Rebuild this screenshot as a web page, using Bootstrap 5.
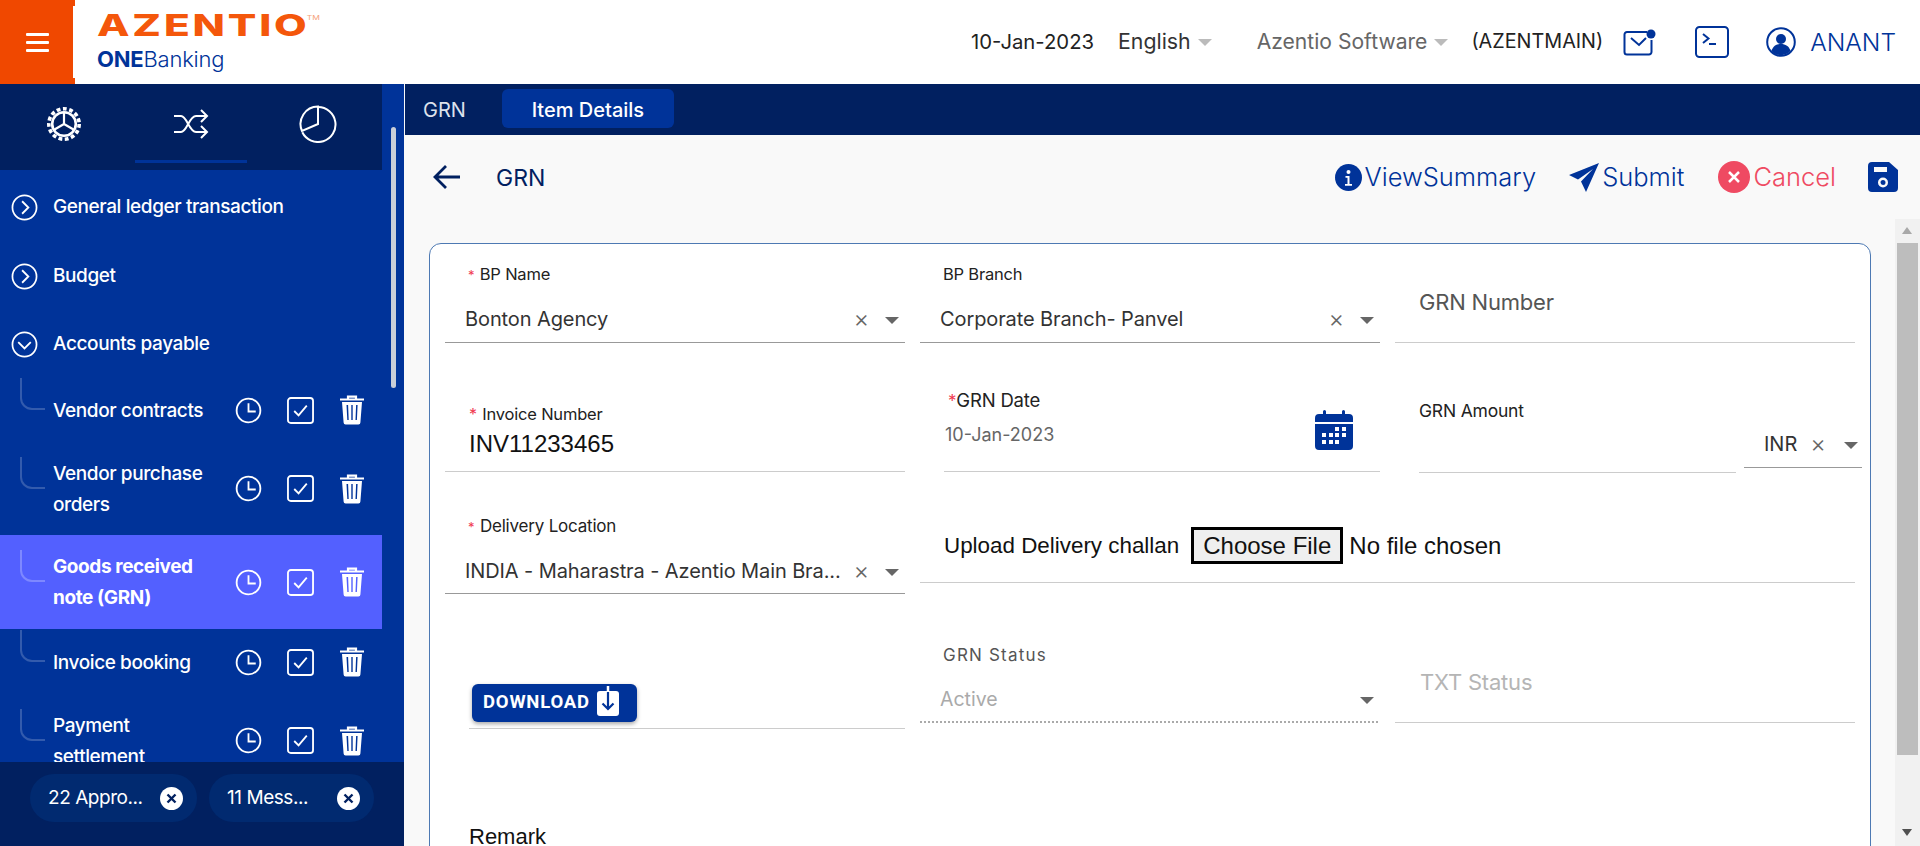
<!DOCTYPE html>
<html lang="en">
<head>
  <meta charset="UTF-8" />
  <meta name="viewport" content="width=device-width, initial-scale=1.0"/>
  <title>GRN - Item Details</title>
  <link href="https://cdn.jsdelivr.net/npm/bootstrap@5.3.0/dist/css/bootstrap.min.css" rel="stylesheet"/>
  <style>
    html, body { height: 100%; overflow: hidden; }
    body { font-family: Inter, "Liberation Sans", sans-serif; background: #f9f9f9; color: #222; }

    /* header */
    .top-bar { height: 84px; background: #fff; flex-wrap: nowrap; }
    .burger { width: 75px; height: 84px; background: #f04800; position: relative; flex: none; }
    .burger::after { content: ""; position: absolute; right: 0; top: 6px; bottom: 6px; width: 2px; background: #fff; }
    .burger span { display: block; width: 23px; height: 3px; background: #fff; margin: 2.5px 0; border-radius: 1px; }
    .logo-box { margin-left: 22px; }
    .logo-main { font: 800 30px/26px Inter, sans-serif; color: #f4570b; letter-spacing: 2px; transform: scaleX(1.41); transform-origin: left center; white-space: nowrap; }
    .logo-main sup { font-size: 6px; font-weight: 400; top: -16px; letter-spacing: 0; color: #f6a27a; margin-left: -2px; }
    .logo-sub { font: 300 22px/26px Inter, sans-serif; color: #003399; margin-top: 8px; letter-spacing: -.2px; }
    .logo-sub b { font-weight: 700; }
    .top-date { font-size: 20.3px; color: #222; margin-right: 24px; }
    .top-lang { font-size: 21.3px; color: #333; }
    .top-org { font-size: 21.1px; color: #666; margin-left: 45px; }
    .top-caret { width: 0; height: 0; border-left: 7px solid transparent; border-right: 7px solid transparent; border-top: 7px solid #bbb; margin-left: 7px; }
    .top-code { font-size: 19.8px; color: #222; margin-left: 23px; margin-right: 20px; }
    .top-user { font-size: 24.5px; color: #003399; margin-left: 14px; font-weight: 300; }
    .top-gap-a { margin-left: 39px; }
    .top-gap-b { margin-left: 37px; }

    /* sidebar */
    .page-body { height: 762px; }
    .side-wrap { width: 404px; flex: none; background: #003399; font-family: Inter, sans-serif; position: relative; overflow: hidden; }
    .side-tabs { width: 382px; height: 86px; background: #012060; position: relative; flex: none; }
    .side-tabs .tab-cell { width: 127px; height: 80px; }
    .tab-line { position: absolute; left: 135px; top: 76px; width: 112px; height: 3px; background: #003399; }
    .side-thumb { position: absolute; left: 391px; top: 43px; width: 5px; height: 261px; background: #c8ced8; border-radius: 3px; }
    .side-list { width: 382px; flex: 1 1 auto; overflow: hidden; padding-top: 3px; }
    .menu-top { color: #fff; font-size: 19px; font-weight: 500; padding-left: 11px; gap: 15px; letter-spacing: -.4px; }
    .menu-sub { position: relative; color: #fff; font-size: 19px; font-weight: 500; line-height: 31px; padding-left: 53px; letter-spacing: -.4px; }
    .menu-sub::before { content: ""; position: absolute; left: 20px; top: calc(50% - 32px); width: 25px; height: 32px; border-left: 2px solid rgba(255,255,255,.2); border-bottom: 2px solid rgba(255,255,255,.2); border-bottom-left-radius: 12px; }
    .menu-sub.is-active { background: #5360ff; font-weight: 700; }
    .menu-sub.is-active::before { border-color: rgba(255,255,255,.25); }
    .menu-name { width: 165px; flex: none; }
    .menu-acts { gap: 25px; margin-left: 17px; }
    .side-foot { height: 84px; background: #012060; flex: none; padding: 12px 30px 0; gap: 12px; position: relative; }
    .foot-chip { height: 48px; background: #012a70; border-radius: 24px; color: #fff; font-size: 19px; padding: 0 14px 0 18px; letter-spacing: -.45px; }
    .foot-close { width: 23px; height: 23px; border-radius: 50%; background: #fff; flex: none; }

    /* main */
    .main-wrap { flex: 1 1 auto; min-width: 0; }
    .sub-tabs { height: 51px; background: #012060; margin-left: 1px; padding-left: 18px; flex: none; }
    .sub-tab { font-size: 20px; color: #dde2ec; }
    .sub-tab-on { height: 39px; width: 172px; margin-top: 5px; margin-left: 36px; padding-top: 2px; background: #003399; color: #fff; font-weight: 500; border-radius: 6px; }
    .tool-bar { height: 84px; flex: none; padding: 0 22px 0 29px; }
    .tool-title { font-size: 23px; color: #012060; margin-left: 35px; margin-top: 3px; }
    .tool-act { font-size: 25.5px; font-weight: 300; color: #003399; gap: 3px; }
    .tool-act.is-cancel { color: #ef4a62; }
    .scroll-area { flex: 1 1 auto; min-height: 0; }
    .form-pane { flex: 1 1 auto; min-width: 0; padding: 24px 24px 0 25px; overflow: hidden; }
    .form-card { border: 1px solid #4d79b3; border-radius: 12px; background: #fff; padding: 0 15px 60px; }
    .grn-row { --bs-gutter-x: 15px; --bs-gutter-y: 0; align-items: flex-start; }
    .fake-bar { width: 25px; flex: none; background: #f1f1f1; position: relative; }
    .fake-bar .bar-thumb { position: absolute; left: 2px; right: 2px; top: 24px; height: 512px; background: #bdbdbd; }
    .bar-up, .bar-down { position: absolute; left: 7px; width: 0; height: 0; border-left: 5.5px solid transparent; border-right: 5.5px solid transparent; }
    .bar-up { top: 8px; border-bottom: 7px solid #a8a8a8; }
    .bar-down { bottom: 10px; border-top: 7px solid #505050; }

    /* fields */
    .fld { border-bottom: 1px solid #ccc; position: relative; display: flex; flex-direction: column; }
    .fld-sel { border-bottom-color: #999; }
    .ht-99 { height: 99px; }
    .ht-129 { height: 129px; }
    .ht-122 { height: 122px; }
    .ht-111 { height: 111px; }
    .ht-135 { height: 135px; }
    .fld-lbl { font-size: 16.5px; color: #222; line-height: 20px; letter-spacing: -.2px; }
    .req { color: #f0394f; font-size: 13px; margin-right: 1px; }
    .fld-val { font-size: 20px; color: #333; line-height: 24px; padding-left: 20px; letter-spacing: -.1px; }
    .sel-line { position: relative; padding-right: 72px; white-space: nowrap; }
    .sel-x { position: absolute; right: 36px; top: 0; font-size: 24px; line-height: 24px; color: #666; font-weight: 300; }
    .sel-caret { position: absolute; right: 6px; top: 10px; width: 0; height: 0; border-left: 7px solid transparent; border-right: 7px solid transparent; border-top: 7px solid #666; }
    .arial { font-family: "Liberation Sans", sans-serif; }
    .inv-val { font-size: 24px; color: #111; }
    input.file-in { font: 24px "Liberation Sans", sans-serif; color: #111; width: 370px; background: none; }
    input.file-in::file-selector-button { font: 24px "Liberation Sans", sans-serif; color: #111; background: #efefef; border: 3px solid #000; border-radius: 0; padding: 0 9px; height: 37px; margin-right: 6px; }
    .up-label { font: 22.4px "Liberation Sans", sans-serif; color: #111; margin-right: 12px; }
    .btn-dl { background: #003399; color: #fff; font-family: Roboto, sans-serif; font-size: 18.5px; font-weight: 700; height: 38px; width: 165px; border: 0; border-radius: 6px; padding: 0 0 0 11px; box-shadow: 0 2px 4px rgba(0,0,0,.35); letter-spacing: .8px; gap: 7px; }
    .btn-dl:hover { background: #003399; color: #fff; }
    .dotted-line { border-bottom: 2px dotted #aaa; }
    .muted-lbl { font-size: 17px; color: #555; letter-spacing: 1.2px; line-height: 20px; }
    .ph-big { font-size: 22px; line-height: 24px; letter-spacing: -.2px; }
    .remark-lbl { font: 22px "Liberation Sans", Roboto, sans-serif; color: #111; margin-top: 95px; padding-left: 24px; line-height: 26px; }
  </style>
</head>
<body>

<svg width="0" height="0" class="d-block position-absolute">
  <symbol id="ic-clock" viewBox="0 0 28 28"><circle cx="14" cy="14" r="12.3" fill="none" stroke="#fff" stroke-width="1.9"/><path d="M14 6.5V15h7.5" fill="none" stroke="#fff" stroke-width="1.9"/></symbol>
  <symbol id="ic-check" viewBox="0 0 28 28"><rect x="1" y="1" width="26" height="26" rx="3" fill="none" stroke="#fff" stroke-width="1.9"/><path d="M7.5 14.5l4.5 4.5 8.5-10" fill="none" stroke="#fff" stroke-width="1.9"/></symbol>
  <symbol id="ic-trash" viewBox="0 0 26 30"><path d="M9 3.5V1.6h8v1.9M1 4.5h24" fill="none" stroke="#fff" stroke-width="2.2"/><path fill-rule="evenodd" fill="#fff" d="M3 7h20l-1.6 20.5a2 2 0 0 1-2 2H6.600a2 2 0 0 1-2-2zM7.500 10l.8 15h1.400l-.6-15zM12.300 10v15h1.400V10zM17.100 10l-.6 15h1.400l.7-15z"/></symbol>
  <symbol id="ic-right" viewBox="0 0 28 28"><circle cx="14" cy="14" r="12.500" fill="none" stroke="#fff" stroke-width="1.800"/><path d="M11.500 7.500L18 14l-6.500 6.500" fill="none" stroke="#fff" stroke-width="1.900"/></symbol>
  <symbol id="ic-down" viewBox="0 0 28 28"><circle cx="14" cy="14" r="12.500" fill="none" stroke="#fff" stroke-width="1.800"/><path d="M7.500 11.500L14 18l6.500-6.500" fill="none" stroke="#fff" stroke-width="1.900"/></symbol>
  <symbol id="ic-x" viewBox="0 0 23 23"><path d="M7.500 7.500l8 8M15.500 7.500l-8 8" stroke="#012060" stroke-width="2.400" fill="none"/></symbol>
</svg>

<header class="navbar top-bar p-0 d-flex align-items-center">
  <div class="burger d-flex flex-column align-items-center justify-content-center"><span></span><span></span><span></span></div>
  <div class="logo-box">
    <div class="logo-main">AZENTIO<sup>TM</sup></div>
    <div class="logo-sub"><b>ONE</b>Banking</div>
  </div>
  <div class="ms-auto d-flex align-items-center pe-4">
    <span class="top-date">10-Jan-2023</span>
    <span class="top-lang">English</span><span class="top-caret"></span>
    <span class="top-org">Azentio Software</span><span class="top-caret"></span>
    <span class="top-code">(AZENTMAIN)</span>
    <svg width="33" height="27" viewBox="0 0 33 27"><path d="M24 3H4a2.500 2.500 0 0 0-2.500 2.500V23A2.500 2.500 0 0 0 4 25.500h22a2.500 2.500 0 0 0 2.500-2.500V11" fill="none" stroke="#003399" stroke-width="2"/><path d="M8 9l8 7 7-7" fill="none" stroke="#003399" stroke-width="2"/><circle cx="28" cy="5" r="4.500" fill="#003399"/></svg>
    <svg width="34" height="32" viewBox="0 0 34 32" class="top-gap-a"><rect x="1" y="1" width="32" height="30" rx="3.500" fill="none" stroke="#003399" stroke-width="2"/><path d="M8 8l5.500 4.500L8 17M14 18h7" fill="none" stroke="#003399" stroke-width="2"/></svg>
    <svg width="30" height="30" viewBox="0 0 30 30" class="top-gap-b"><circle cx="15" cy="15" r="13.800" fill="none" stroke="#003399" stroke-width="2"/><circle cx="15" cy="12" r="5" fill="#003399"/><path d="M5.500 24c1.500-5 5-7 9.500-7s8 2 9.500 7a13 13 0 0 1-19 0z" fill="#003399"/></svg>
    <span class="top-user">ANANT</span>
  </div>
</header>

<div class="page-body d-flex">
  <aside class="side-wrap d-flex flex-column">
    <div class="side-tabs d-flex">
      <div class="tab-cell d-flex align-items-center justify-content-center">
        <svg width="36" height="36" viewBox="0 0 36 36"><circle cx="18" cy="18" r="15.200" fill="none" stroke="#fff" stroke-width="3.600" stroke-dasharray="3.800 2.570"/><circle cx="18" cy="18" r="11.800" fill="none" stroke="#fff" stroke-width="2.600"/><path d="M18 18V7M18 18l9.500 5.500M18 18L8.500 23.500" stroke="#fff" stroke-width="2.200" fill="none"/></svg>
      </div>
      <div class="tab-cell d-flex align-items-center justify-content-center">
        <svg width="36" height="30" viewBox="0 0 36 30"><path d="M1 7h7c6 0 8 16 15 16h11M1 23h7c6 0 8-16 15-16h11" fill="none" stroke="#fff" stroke-width="2"/><path d="M28 1l6 6-6 6M28 17l6 6-6 6" fill="none" stroke="#fff" stroke-width="2"/></svg>
      </div>
      <div class="tab-cell d-flex align-items-center justify-content-center">
        <svg width="38" height="38" viewBox="0 0 38 38"><path d="M19 2a17.500 17.500 0 1 1-15.700 25.200" fill="none" stroke="#fff" stroke-width="2"/><path d="M19 1.500a17.500 17.500 0 0 0-16 24.500L19 19V1.500z" fill="none" stroke="#fff" stroke-width="2"/></svg>
      </div>
      <div class="tab-line"></div>
    </div>
    <div class="side-thumb"></div>
    <div class="side-list">
      <div class="menu-top d-flex align-items-center" style="height:68px"><svg width="27" height="27"><use href="#ic-right"/></svg>General ledger transaction</div>
      <div class="menu-top d-flex align-items-center" style="height:70px"><svg width="27" height="27"><use href="#ic-right"/></svg>Budget</div>
      <div class="menu-top d-flex align-items-center" style="height:67px"><svg width="27" height="27"><use href="#ic-down"/></svg>Accounts payable</div>

      <div class="menu-sub d-flex align-items-center" style="height:64px">
        <div class="menu-name">Vendor contracts</div>
        <div class="menu-acts d-flex align-items-center"><svg width="27" height="27"><use href="#ic-clock"/></svg><svg width="27" height="27"><use href="#ic-check"/></svg><svg width="26" height="30"><use href="#ic-trash"/></svg></div>
      </div>
      <div class="menu-sub d-flex align-items-center" style="height:93px">
        <div class="menu-name">Vendor purchase orders</div>
        <div class="menu-acts d-flex align-items-center"><svg width="27" height="27"><use href="#ic-clock"/></svg><svg width="27" height="27"><use href="#ic-check"/></svg><svg width="26" height="30"><use href="#ic-trash"/></svg></div>
      </div>
      <div class="menu-sub is-active d-flex align-items-center" style="height:94px">
        <div class="menu-name">Goods received note (GRN)</div>
        <div class="menu-acts d-flex align-items-center"><svg width="27" height="27"><use href="#ic-clock"/></svg><svg width="27" height="27"><use href="#ic-check"/></svg><svg width="26" height="30"><use href="#ic-trash"/></svg></div>
      </div>
      <div class="menu-sub d-flex align-items-center" style="height:66px">
        <div class="menu-name">Invoice booking</div>
        <div class="menu-acts d-flex align-items-center"><svg width="27" height="27"><use href="#ic-clock"/></svg><svg width="27" height="27"><use href="#ic-check"/></svg><svg width="26" height="30"><use href="#ic-trash"/></svg></div>
      </div>
      <div class="menu-sub d-flex align-items-center" style="height:91px">
        <div class="menu-name">Payment settlement</div>
        <div class="menu-acts d-flex align-items-center"><svg width="27" height="27"><use href="#ic-clock"/></svg><svg width="27" height="27"><use href="#ic-check"/></svg><svg width="26" height="30"><use href="#ic-trash"/></svg></div>
      </div>
    </div>
    <div class="side-foot d-flex">
      <div class="foot-chip d-flex align-items-center justify-content-between" style="width:167px">22 Appro...<svg class="foot-close" viewBox="0 0 23 23"><use href="#ic-x"/></svg></div>
      <div class="foot-chip d-flex align-items-center justify-content-between" style="width:165px">11 Mess...<svg class="foot-close" viewBox="0 0 23 23"><use href="#ic-x"/></svg></div>
    </div>
  </aside>

  <main class="main-wrap d-flex flex-column">
    <div class="sub-tabs d-flex align-items-center">
      <span class="sub-tab">GRN</span>
      <div class="sub-tab sub-tab-on d-flex align-items-center justify-content-center align-self-start">Item Details</div>
    </div>
    <div class="tool-bar d-flex align-items-center">
      <svg width="28" height="26" viewBox="0 0 28 26"><path d="M27 13H3M13 2L2 13l11 11" fill="none" stroke="#012060" stroke-width="2.800"/></svg>
      <span class="tool-title">GRN</span>
      <div class="ms-auto d-flex align-items-center">
        <div class="tool-act d-flex align-items-center">
          <svg width="27" height="27" viewBox="0 0 27 27"><circle cx="13.500" cy="13.500" r="13.500" fill="#003399"/><circle cx="13.500" cy="8" r="2" fill="#fff"/><path d="M10.500 12h4v8h2.500v1.800h-7V20h2.500v-6.200h-2z" fill="#fff"/></svg>ViewSummary
        </div>
        <div class="tool-act d-flex align-items-center" style="margin-left:33px">
          <svg width="30" height="30" viewBox="0 0 30 30"><path d="M30 1L0 13l9 4.500L24 7 12 19.500 17 30z" fill="#003399"/></svg>Submit
        </div>
        <div class="tool-act is-cancel d-flex align-items-center" style="margin-left:34px">
          <svg width="32" height="32" viewBox="0 0 32 32"><circle cx="16" cy="16" r="16" fill="#ef4a62"/><path d="M11 11l10 10M21 11L11 21" stroke="#fff" stroke-width="2.500" fill="none"/></svg>Cancel
        </div>
        <svg width="30" height="30" viewBox="0 0 30 30" style="margin-left:32px"><path fill-rule="evenodd" fill="#003399" d="M4 0h17l9 8v18a4 4 0 0 1-4 4H4a4 4 0 0 1-4-4V4a4 4 0 0 1 4-4zM6 5v5h13V5zM15 15.500a5 5 0 1 0 0 10 5 5 0 0 0 0-10zM15 18a2.500 2.500 0 1 1 0 5 2.500 2.500 0 0 1 0-5z"/></svg>
      </div>
    </div>

    <div class="scroll-area d-flex">
      <div class="form-pane">
        <form class="card form-card" onsubmit="return false">
          <div class="row grn-row">
            <div class="col-4">
              <div class="fld fld-sel ht-99">
                <div class="fld-lbl" style="margin:20px 0 0 23px"><span class="req">*</span> BP Name</div>
                <div class="fld-val sel-line" style="margin-top:22px">Bonton Agency<span class="sel-x">×</span><span class="sel-caret"></span></div>
              </div>
            </div>
            <div class="col-4">
              <div class="fld fld-sel ht-99">
                <div class="fld-lbl" style="margin:20px 0 0 23px">BP Branch</div>
                <div class="fld-val sel-line" style="margin-top:23px">Corporate Branch- Panvel<span class="sel-x">×</span><span class="sel-caret"></span></div>
              </div>
            </div>
            <div class="col-4">
              <div class="fld ht-99">
                <div class="ph-big" style="margin:46px 0 0 24px;color:#555">GRN Number</div>
              </div>
            </div>
          </div>
          <div class="row grn-row">
            <div class="col-4">
              <div class="fld ht-129">
                <div class="fld-lbl" style="margin:61px 0 0 24px"><span class="req" style="font-size:16px">*</span> Invoice Number</div>
                <div class="arial inv-val" style="margin:7px 0 0 24px;line-height:26px">INV11233465</div>
              </div>
            </div>
            <div class="col-4">
              <div class="fld ht-129" style="margin-left:24px">
                <div class="fld-lbl" style="font-size:18.5px;margin:47px 0 0 4px"><span class="req" style="font-size:17px;margin-right:0">*</span>GRN Date</div>
                <div style="font-size:18px;color:#666;margin:12px 0 0 1px;line-height:24px">10-Jan-2023</div>
                <svg width="38" height="40" viewBox="0 0 38 40" class="position-absolute" style="right:27px;top:67px"><path fill-rule="evenodd" fill="#003399" d="M4 4h4V1.500a1.500 1.500 0 0 1 3 0V4h16V1.500a1.500 1.500 0 0 1 3 0V4h4a4 4 0 0 1 4 4v4H0V8a4 4 0 0 1 4-4zM0 14h38v22a4 4 0 0 1-4 4H4a4 4 0 0 1-4-4z"/><g fill="#fff"><rect x="20" y="17" width="4" height="4"/><rect x="27" y="17" width="4" height="4"/><rect x="7" y="23" width="4" height="4"/><rect x="14" y="23" width="4" height="4"/><rect x="20" y="23" width="4" height="4"/><rect x="27" y="23" width="4" height="4"/><rect x="7" y="30" width="4" height="4"/><rect x="14" y="30" width="4" height="4"/><rect x="20" y="30" width="4" height="4"/></g></svg>
              </div>
            </div>
            <div class="col-4 d-flex ht-129">
              <div class="fld" style="height:130px;width:317px;margin-left:24px;flex:none">
                <div class="fld-lbl" style="margin-top:58px;font-size:17.5px">GRN Amount</div>
              </div>
              <div class="fld fld-sel" style="height:125px;width:118px;margin-left:8px;flex:none">
                <div class="sel-line" style="margin:89px 0 0 20px;font-size:20px;line-height:24px;color:#333">INR<span class="sel-x" style="right:36px">×</span><span class="sel-caret" style="right:4px"></span></div>
              </div>
            </div>
          </div>
          <div class="row grn-row">
            <div class="col-4">
              <div class="fld fld-sel ht-122">
                <div class="fld-lbl" style="margin:44px 0 0 23px;font-size:17px"><span class="req">*</span> Delivery Location</div>
                <div class="fld-val sel-line" style="margin-top:22px">INDIA - Maharastra - Azentio Main Bra...<span class="sel-x">×</span><span class="sel-caret"></span></div>
              </div>
            </div>
            <div class="col-8">
              <div class="fld ht-111 justify-content-start">
                <div class="d-flex align-items-center" style="margin:55px 0 0 24px"><span class="up-label">Upload Delivery challan</span><input class="file-in" type="file"></div>
              </div>
            </div>
          </div>
          <div class="row grn-row">
            <div class="col-4">
              <div class="fld ht-135" style="margin-left:24px">
                <button type="button" class="btn btn-dl d-flex align-items-center" style="margin:90px 0 0 3px">DOWNLOAD
                  <svg width="22" height="30" viewBox="0 0 22 30" style="margin-top:-5px"><rect x="0" y="5" width="22" height="25" rx="3" fill="#fff"/><path d="M11 0v21" stroke="#fff" stroke-width="2.500"/><path d="M11 6v17M5.500 17.500L11 23l5.500-5.500" stroke="#003399" stroke-width="2.200" fill="none"/></svg>
                </button>
              </div>
            </div>
            <div class="col-4">
              <div class="fld dotted-line" style="height:129px;margin-right:2px">
                <div class="muted-lbl" style="margin:51px 0 0 23px">GRN Status</div>
                <div class="sel-line" style="margin:22px 0 0 20px;font-size:19.5px;line-height:24px;color:#aaa">Active<span class="sel-caret" style="right:4px"></span></div>
              </div>
            </div>
            <div class="col-4">
              <div class="fld" style="height:129px">
                <div class="ph-big" style="margin:76px 0 0 25px;color:#b5b5b5">TXT Status</div>
              </div>
            </div>
          </div>
          <div class="remark-lbl">Remark</div>
        </form>
      </div>
      <div class="fake-bar">
        <span class="bar-up"></span>
        <div class="bar-thumb"></div>
        <span class="bar-down"></span>
      </div>
    </div>
  </main>
</div>

</body>
</html>
